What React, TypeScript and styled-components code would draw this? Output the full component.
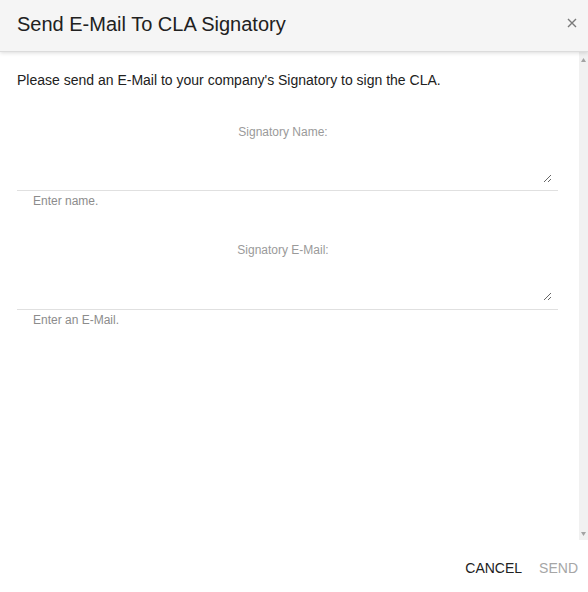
import React from 'react';
import styled, { createGlobalStyle } from 'styled-components';

const GlobalStyle = createGlobalStyle`
  html, body {
    margin: 0;
    padding: 0;
    height: 100%;
    background: #ffffff;
    font-family: "Liberation Sans", Arial, sans-serif;
  }
  #root {
    height: 100%;
  }
`;

const Dialog = styled.div`
  display: flex;
  flex-direction: column;
  width: 588px;
  height: 592px;
  background: #ffffff;
  overflow: hidden;
`;

const Header = styled.header`
  position: relative;
  z-index: 1;
  display: flex;
  align-items: center;
  justify-content: space-between;
  height: 51px;
  padding: 0 6px 0 17px;
  background: #f5f5f5;
  border-bottom: 1px solid #dcdcdc;
  box-shadow: 0 1px 4px rgba(0, 0, 0, 0.14);
  flex-shrink: 0;
`;

const Title = styled.h2`
  margin: 0;
  font-size: 20px;
  font-weight: 400;
  color: #212121;
  line-height: 24px;
  padding-bottom: 3px;
`;

const CloseButton = styled.button`
  display: flex;
  align-items: center;
  justify-content: center;
  width: 20px;
  height: 20px;
  padding: 0;
  margin-bottom: 5px;
  border: none;
  background: transparent;
  cursor: pointer;
`;

const BodyRow = styled.div`
  flex: 1;
  display: flex;
  min-height: 0;
`;

const Body = styled.div`
  flex: 1;
  overflow-y: auto;
  padding: 18px 21px 0 17px;
`;

const ScrollTrack = styled.div`
  display: flex;
  flex-direction: column;
  justify-content: space-between;
  align-items: center;
  width: 9px;
  padding: 6px 0 4px;
  box-sizing: border-box;
  background: #f1f1f1;
  flex-shrink: 0;
`;

const Intro = styled.p`
  margin: 0;
  font-size: 14px;
  line-height: 20px;
  color: #212121;
`;

const Field = styled.div`
  display: flex;
  flex-direction: column;
  margin-top: 34px;
`;

const Label = styled.label`
  text-align: center;
  padding-right: 9px;
  font-size: 12px;
  line-height: 16px;
  color: #9a9a9a;
`;

const InputWrap = styled.div<{ $gap: number }>`
  padding: 3px 6px ${p => p.$gap}px 0;
  border-bottom: 1px solid #e0e0e0;
`;

const TextArea = styled.textarea`
  display: block;
  box-sizing: border-box;
  width: 100%;
  height: 40px;
  margin: 0;
  padding: 0;
  border: none;
  outline: none;
  resize: vertical;
  background: transparent;
  font-family: "Liberation Sans", Arial, sans-serif;
  font-size: 14px;
  color: #212121;
`;

const Helper = styled.div`
  margin-top: 3px;
  padding-left: 16px;
  font-size: 12px;
  line-height: 14px;
  color: #8c8c8c;
`;

const Footer = styled.footer`
  display: flex;
  align-items: center;
  justify-content: flex-end;
  gap: 1px;
  height: 52px;
  box-sizing: border-box;
  padding: 4px 2px 0 0;
  flex-shrink: 0;
`;

const ActionButton = styled.button<{ $disabled?: boolean }>`
  padding: 6px 8px;
  border: none;
  background: transparent;
  font-family: "Liberation Sans", Arial, sans-serif;
  font-size: 14px;
  line-height: 20px;
  text-transform: uppercase;
  color: ${p => (p.$disabled ? '#a6a6a6' : '#212121')};
  cursor: ${p => (p.$disabled ? 'default' : 'pointer')};
`;

const fields = [
  { id: 'name', label: 'Signatory Name:', helper: 'Enter name.', gap: 7 },
  { id: 'email', label: 'Signatory E-Mail:', helper: 'Enter an E-Mail.', gap: 8 },
];

const Arrow: React.FC<{ down?: boolean }> = ({ down }) => (
  <svg width="5" height="4" viewBox="0 0 5 4">
    <path d={down ? 'M0 0 L5 0 L2.5 4 Z' : 'M0 4 L5 4 L2.5 0 Z'} fill="#a3a3a3" />
  </svg>
);

const App: React.FC = () => {
  return (
    <>
      <GlobalStyle />
      <Dialog>
        <Header>
          <Title>Send E-Mail To CLA Signatory</Title>
          <CloseButton aria-label="Close">
            <svg width="10" height="10" viewBox="0 0 10 10">
              <path d="M1 1 L9 9 M9 1 L1 9" stroke="#7a7a7a" strokeWidth="1.4" fill="none" />
            </svg>
          </CloseButton>
        </Header>

        <BodyRow>
          <Body>
            <Intro>Please send an E-Mail to your company's Signatory to sign the CLA.</Intro>
            {fields.map(field => (
              <Field key={field.id}>
                <Label htmlFor={field.id}>{field.label}</Label>
                <InputWrap $gap={field.gap}>
                  <TextArea id={field.id} />
                </InputWrap>
                <Helper>{field.helper}</Helper>
              </Field>
            ))}
          </Body>
          <ScrollTrack>
            <Arrow />
            <Arrow down />
          </ScrollTrack>
        </BodyRow>

        <Footer>
          <ActionButton>Cancel</ActionButton>
          <ActionButton $disabled disabled>Send</ActionButton>
        </Footer>
      </Dialog>
    </>
  );
};

export default App;
